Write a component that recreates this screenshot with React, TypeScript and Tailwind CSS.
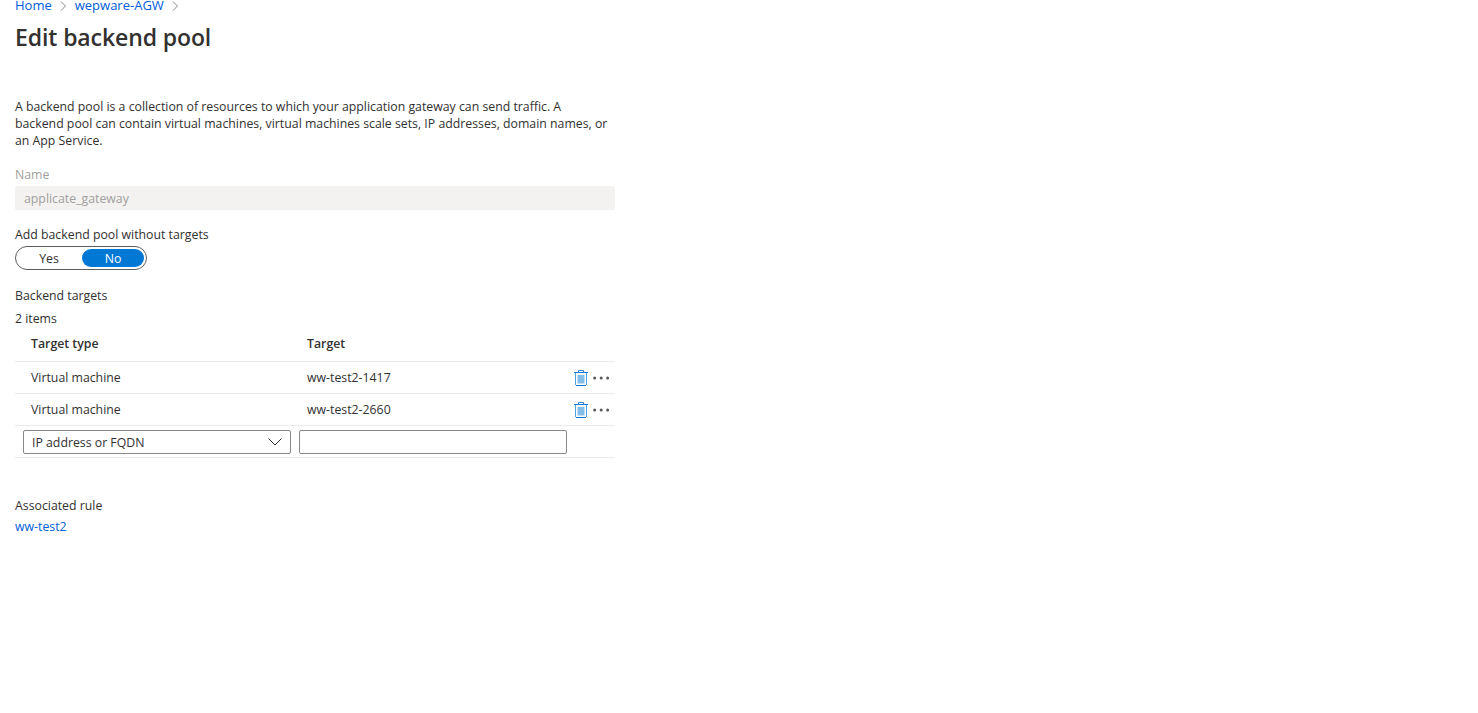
import React from "react";

function Trash() {
  return (
    <svg width="14" height="16" viewBox="0 0 14 16" className="block">
      <rect x="3.5" y="5" width="7" height="8.5" fill="#83bdea" />
      <path d="M0 2.5H14" stroke="#0f78d4" strokeWidth="1" fill="none" />
      <path d="M4.5 2.5V0.5H9.5V2.5" stroke="#2f8cdc" strokeWidth="1" fill="none" />
      <path d="M1.5 3V15M12.5 3V15" stroke="#4ba3e6" strokeWidth="1" fill="none" />
      <path d="M2 15.5H12" stroke="#0f78d4" strokeWidth="1" fill="none" />
    </svg>
  );
}

function Dots() {
  return (
    <svg width="17" height="4" viewBox="0 0 17 4" className="block">
      <circle cx="1.7" cy="2" r="1.5" fill="#5a5a5a" />
      <circle cx="8.2" cy="2" r="1.5" fill="#5a5a5a" />
      <circle cx="14.6" cy="2" r="1.5" fill="#5a5a5a" />
    </svg>
  );
}

function Chevron() {
  return (
    <svg width="9" height="14" viewBox="0 0 9 14" className="block">
      <path d="M2 2.5L6.5 7L2 11.5" stroke="#8a8886" strokeWidth="1" fill="none" />
    </svg>
  );
}

function Row({ target }: { target: string }) {
  return (
    <div className="flex h-8 items-center border-b border-[#edebe9]">
      <div className="w-[292px] pl-4">Virtual machine</div>
      <div className="flex-1">{target}</div>
      <div className="flex items-center gap-[5px] pr-[5px]">
        <Trash />
        <Dots />
      </div>
    </div>
  );
}

export default function App() {
  return (
    <div className="h-[713px] overflow-hidden bg-white pl-[15px] font-['Open_Sans','Noto_Sans',sans-serif] text-[12.3px] leading-[17px] text-[#323130]">
      <div className="w-[600px]">
        <div className="-mt-[3px] flex h-[17px] items-center gap-[7px] text-[13px] text-[#015cda]">
          <span>Home</span>
          <Chevron />
          <span>wepware-AGW</span>
          <Chevron />
        </div>
        <h1 className="mt-[7px] h-[32px] text-[23px] leading-[32px] font-semibold tracking-[-0.1px]">Edit backend pool</h1>
        <p className="mt-[45px] w-[595px]">
          A backend pool is a collection of resources to which your application gateway can send traffic. A backend pool can contain virtual machines, virtual machines scale sets, IP addresses, domain names, or an App Service.
        </p>

        <div className="mt-[17px] h-[17px] text-[#a19f9d]">Name</div>
        <div className="mt-[3px] flex h-6 items-center rounded-[2px] bg-[#f3f2f1] pl-[9px] text-[#a19f9d]">applicate_gateway</div>

        <div className="mt-4 h-[17px]">Add backend pool without targets</div>
        <div className="mt-[3px] flex h-6 w-[132px] items-center rounded-full border border-[#605e5c] p-[2px]">
          <div className="flex h-[18px] w-[64px] items-center justify-center pr-[2px]">Yes</div>
          <div className="flex h-[18px] w-[62px] items-center justify-center rounded-full bg-[#0078d4] text-white">No</div>
        </div>

        <div className="mt-[17px] h-[17px]">Backend targets</div>
        <div className="mt-[6px] h-[17px]">2 items</div>

        <div className="mt-[4px] flex h-[31px] items-center border-b border-[#edebe9] pb-[5px] font-semibold">
          <div className="w-[292px] pl-4">Target type</div>
          <div>Target</div>
        </div>
        <Row target="ww-test2-1417" />
        <Row target="ww-test2-2660" />
        <div className="flex h-8 items-center gap-2 border-b border-[#edebe9] pl-2">
          <div className="flex h-6 w-[268px] items-center justify-between rounded-[2px] border border-[#8a8886] pl-2 pr-2">
            <span className="pt-[1px]">IP address or FQDN</span>
            <svg width="14" height="8" viewBox="0 0 14 8">
              <path d="M0.5 0.5L7 7L13.5 0.5" stroke="#323130" strokeWidth="1" fill="none" />
            </svg>
          </div>
          <div className="h-6 w-[268px] rounded-[2px] border border-[#8a8886]" />
        </div>

        <div className="mt-[39px] h-[17px]">Associated rule</div>
        <div className="mt-1 h-[17px] text-[#015cda]">ww-test2</div>
      </div>
    </div>
  );
}
